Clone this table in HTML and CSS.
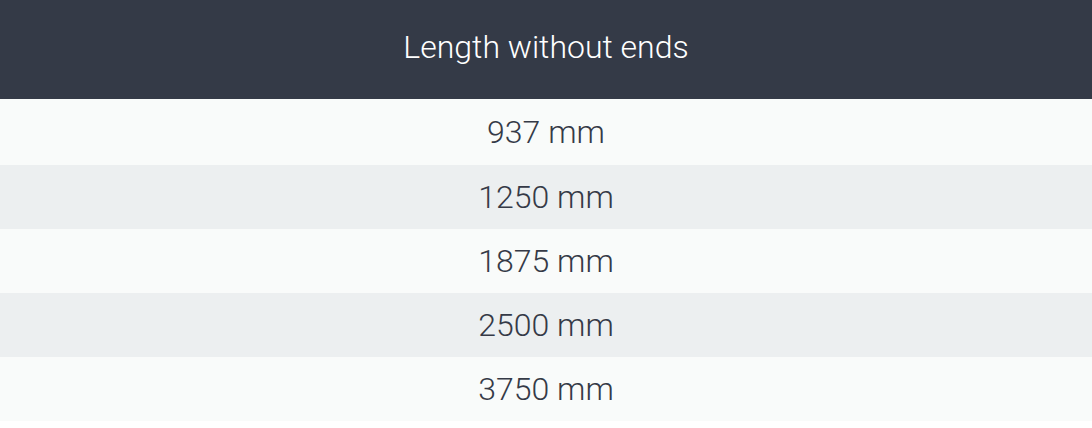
FILE: index.html
```html
<!DOCTYPE html>
<html>
<head>
<meta charset="utf-8">
<link rel="stylesheet" href="styles.css">
</head>
<body>
<table class="spec">
  <thead>
    <tr><th>Length without ends</th></tr>
  </thead>
  <tbody>
    <tr class="odd first"><td>937 mm</td></tr>
    <tr class="even"><td>1250 mm</td></tr>
    <tr class="odd"><td>1875 mm</td></tr>
    <tr class="even"><td>2500 mm</td></tr>
    <tr class="odd"><td>3750 mm</td></tr>
  </tbody>
</table>
</body>
</html>
```
FILE: styles.css
```css
html, body {
  margin: 0;
  padding: 0;
  background: #ffffff;
}
.spec {
  width: 100%;
  border-collapse: collapse;
  font-family: Roboto, "Liberation Sans", sans-serif;
  font-weight: 300;
}
.spec th {
  height: 99px;
  box-sizing: border-box;
  padding: 0 0 5px 0;
  background: #343a47;
  color: #ffffff;
  font-weight: 300;
  font-size: 32px;
  text-align: center;
  vertical-align: middle;
}
.spec td {
  height: 64px;
  padding: 0;
  text-align: center;
  vertical-align: middle;
  color: #353a47;
  font-size: 32px;
}
.spec tr.first td {
  height: 66px;
}
.spec tr.odd td {
  background: #f9fbfa;
}
.spec tr.even td {
  background: #eceff0;
}
```
